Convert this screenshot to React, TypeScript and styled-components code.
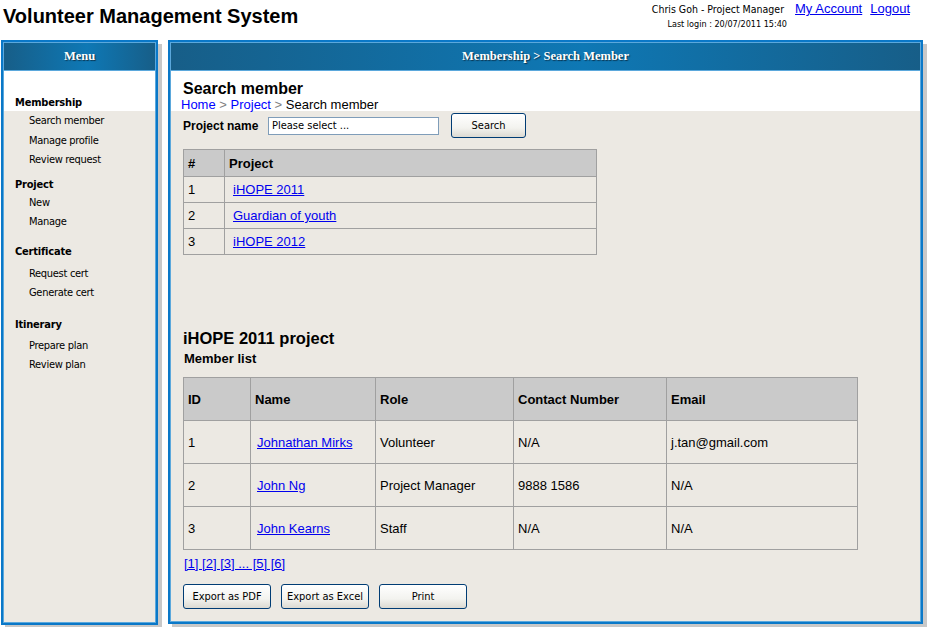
import React from "react";
import styled, { createGlobalStyle } from "styled-components";

const Global = createGlobalStyle`
  html, body { margin: 0; padding: 0; background: #ffffff; }
  body { font-family: "Liberation Sans", Arial, sans-serif; color: #000; }
  * { box-sizing: border-box; }
`;

const tahoma = `"DejaVu Sans Condensed", "DejaVu Sans", sans-serif`;

const Page = styled.div`
  width: 927px;
  height: 627px;
  display: flex;
  flex-direction: column;
`;

const TopBar = styled.header`
  height: 40px;
  display: flex;
  justify-content: space-between;
  align-items: flex-start;
`;

const AppTitle = styled.h1`
  margin: 4px 0 0 3px;
  font: bold 20px "Liberation Sans", Arial, sans-serif;
  line-height: 24px;
`;

const UserBox = styled.div`
  display: flex;
  flex-direction: column;
  align-items: flex-end;
  margin: 1px 17px 0 0;
`;

const UserLine = styled.div`
  display: flex;
  align-items: baseline;
  gap: 8px;
`;

const UserName = styled.span`
  font: 10.5px ${tahoma};
  margin-right: 3px;
`;

const TopLink = styled.a`
  font: 13px "Liberation Sans", Arial, sans-serif;
  color: #0000ee;
  text-decoration: underline;
`;

const LastLogin = styled.div`
  font: 9px ${tahoma};
  margin: 3px 123px 0 0;
`;

const Body = styled.div`
  display: flex;
  align-items: flex-start;
  gap: 10px;
  padding-left: 1px;
`;

const Panel = styled.section<{ $w: number; $h: number }>`
  width: ${(p) => p.$w}px;
  height: ${(p) => p.$h}px;
  border: 2px solid #0a78c8;
  box-shadow: inset 0 0 0 1px #5ba8dc, 4px 4px 0 #c8c8c8;
  background: #ece9e3;
  display: flex;
  flex-direction: column;
  padding: 1px;
`;

const PanelHeader = styled.div<{ $align: string }>`
  height: 28px;
  flex: none;
  background: linear-gradient(to right, #175e88 0%, #0e78b5 55%, #175e88 100%);
  border-bottom: 1px solid #5ba8dc;
  display: flex;
  align-items: center;
  justify-content: ${(p) => p.$align};
  color: #fff;
  font: bold 12.5px "Liberation Serif", "Times New Roman", serif;
  text-shadow: 1px 1px 1px #0b3550;
`;

const WhiteBand = styled.div`
  height: 40px;
  flex: none;
  background: #fff;
`;

const MenuGroup = styled.div<{ $mt: number; $gap: number }>`
  display: flex;
  flex-direction: column;
  margin-top: ${(p) => p.$mt}px;
  & > div:nth-child(2) {
    margin-top: ${(p) => p.$gap}px;
  }
`;

const MenuHead = styled.div`
  font: bold 11px ${tahoma};
  padding-left: 11px;
  height: 16px;
  line-height: 16px;
  letter-spacing: -0.2px;
`;

const MenuItem = styled.div`
  font: 11px ${tahoma};
  padding-left: 25px;
  height: 19.5px;
  line-height: 19.5px;
  letter-spacing: -0.3px;
`;

const MenuBand = styled(WhiteBand)`
  display: flex;
  align-items: flex-end;
`;

const MenuBody = styled.div`
  display: flex;
  flex-direction: column;
`;

const Heading = styled.h2`
  margin: 0;
  padding: 9px 0 0 12px;
  font: bold 16px "Liberation Sans", Arial, sans-serif;
  line-height: 18px;
`;

const Crumbs = styled.div`
  padding-left: 10px;
  font: 13px "Liberation Sans", Arial, sans-serif;
  line-height: 14px;
  white-space: pre;
`;

const CrumbLink = styled.span`
  color: #0000ff;
`;

const CrumbSep = styled.span`
  color: #808080;
`;

const Content = styled.div`
  padding: 2px 0 0 12px;
  display: flex;
  flex-direction: column;
  align-items: flex-start;
`;

const SearchRow = styled.div`
  display: flex;
  align-items: center;
  height: 25px;
  gap: 12px;
`;

const Label = styled.label`
  font: bold 12px "Liberation Sans", Arial, sans-serif;
  width: 73px;
  flex: none;
  white-space: nowrap;
`;

const TextInput = styled.div`
  width: 171px;
  height: 18px;
  border: 1px solid #7f9db9;
  background: #fff;
  font: 11px ${tahoma};
  line-height: 16px;
  padding-left: 3px;
`;

const Button = styled.button<{ $w: number }>`
  width: ${(p) => p.$w}px;
  height: 25px;
  border: 1px solid #003c74;
  border-radius: 3px;
  background: linear-gradient(to bottom, #ffffff 0%, #f3f3ef 60%, #dcdad2 100%);
  font: 11px ${tahoma};
  color: #000;
  padding: 0;
`;

const Table = styled.table<{ $w: number; $mt: number }>`
  width: ${(p) => p.$w}px;
  margin-top: ${(p) => p.$mt}px;
  border-collapse: collapse;
  border: 1px solid #a0a0a0;
  font: 13px "Liberation Sans", Arial, sans-serif;
  table-layout: fixed;
`;

const Th = styled.th<{ $h: number }>`
  background: #cacaca;
  border: 1px solid #a0a0a0;
  text-align: left;
  font-weight: bold;
  height: ${(p) => p.$h}px;
  padding: 0 0 0 4px;
`;

const Td = styled.td<{ $h: number; $pl?: number }>`
  border: 1px solid #a0a0a0;
  height: ${(p) => p.$h}px;
  padding: 0 0 0 ${(p) => p.$pl ?? 4}px;
  vertical-align: middle;
`;

const Link = styled.a`
  color: #0000ee;
  text-decoration: underline;
`;

const ProjectTitle = styled.h3`
  margin: 73px 0 0 0;
  font: bold 16.5px "Liberation Sans", Arial, sans-serif;
  line-height: 20px;
`;

const SubTitle = styled.h4`
  margin: 3px 0 0 1px;
  font: bold 13px "Liberation Sans", Arial, sans-serif;
  line-height: 16px;
`;

const Pager = styled.div`
  margin: 6px 0 0 1px;
  font: 13px "Liberation Sans", Arial, sans-serif;
  white-space: pre;
`;

const ButtonRow = styled.div`
  display: flex;
  gap: 10px;
  margin-top: 13px;
`;

const menu = [
  { head: "Project", items: ["New", "Manage"], mt: 7, gap: 0 },
  { head: "Certificate", items: ["Request cert", "Generate cert"], mt: 12, gap: 4 },
  { head: "Itinerary", items: ["Prepare plan", "Review plan"], mt: 14, gap: 3 },
];

const membershipItems = ["Search member", "Manage profile", "Review request"];

const projects = ["iHOPE 2011", "Guardian of youth", "iHOPE 2012"];

const members = [
  ["1", "Johnathan Mirks", "Volunteer", "N/A", "j.tan@gmail.com"],
  ["2", "John Ng", "Project Manager", "9888 1586", "N/A"],
  ["3", "John Kearns", "Staff", "N/A", "N/A"],
];

const memberCols = [67, 125, 138, 153, 191];

export default function App() {
  return (
    <Page>
      <Global />
      <TopBar>
        <AppTitle>Volunteer Management System</AppTitle>
        <UserBox>
          <UserLine>
            <UserName>Chris Goh - Project Manager</UserName>
            <TopLink href="#">My Account</TopLink>
            <TopLink href="#">Logout</TopLink>
          </UserLine>
          <LastLogin>Last login : 20/07/2011 15:40</LastLogin>
        </UserBox>
      </TopBar>
      <Body>
        <Panel $w={157} $h={585}>
          <PanelHeader $align="center">Menu</PanelHeader>
          <MenuBand>
            <MenuHead>Membership</MenuHead>
          </MenuBand>
          <MenuBody>
            {membershipItems.map((it) => (
              <MenuItem key={it}>{it}</MenuItem>
            ))}
            {menu.map((g) => (
              <MenuGroup key={g.head} $mt={g.mt} $gap={g.gap}>
                <MenuHead>{g.head}</MenuHead>
                {g.items.map((it) => (
                  <MenuItem key={it}>{it}</MenuItem>
                ))}
              </MenuGroup>
            ))}
          </MenuBody>
        </Panel>
        <Panel $w={755} $h={584}>
          <PanelHeader $align="center">Membership &gt; Search Member</PanelHeader>
          <WhiteBand>
            <Heading>Search member</Heading>
            <Crumbs>
              <CrumbLink>Home</CrumbLink>
              <CrumbSep> &gt; </CrumbSep>
              <CrumbLink>Project</CrumbLink>
              <CrumbSep> &gt; </CrumbSep>
              Search member
            </Crumbs>
          </WhiteBand>
          <Content>
            <SearchRow>
              <Label>Project name</Label>
              <TextInput>Please select ...</TextInput>
              <Button $w={75}>Search</Button>
            </SearchRow>
            <Table $w={414} $mt={11}>
              <colgroup>
                <col style={{ width: 41 }} />
                <col />
              </colgroup>
              <thead>
                <tr>
                  <Th $h={27}>#</Th>
                  <Th $h={27}>Project</Th>
                </tr>
              </thead>
              <tbody>
                {projects.map((p, i) => (
                  <tr key={p}>
                    <Td $h={26}>{i + 1}</Td>
                    <Td $h={26} $pl={8}>
                      <Link href="#">{p}</Link>
                    </Td>
                  </tr>
                ))}
              </tbody>
            </Table>
            <ProjectTitle>iHOPE 2011 project</ProjectTitle>
            <SubTitle>Member list</SubTitle>
            <Table $w={674} $mt={10}>
              <colgroup>
                {memberCols.map((w, i) => (
                  <col key={i} style={{ width: w }} />
                ))}
              </colgroup>
              <thead>
                <tr>
                  {["ID", "Name", "Role", "Contact Number", "Email"].map((h) => (
                    <Th key={h} $h={43}>{h}</Th>
                  ))}
                </tr>
              </thead>
              <tbody>
                {members.map((m) => (
                  <tr key={m[0]}>
                    {m.map((c, j) => (
                      <Td key={j} $h={43} $pl={j === 1 ? 6 : 4}>
                        {j === 1 ? <Link href="#">{c}</Link> : c}
                      </Td>
                    ))}
                  </tr>
                ))}
              </tbody>
            </Table>
            <Pager>
              <Link href="#">[1] [2] [3] ... [5] [6]</Link>
            </Pager>
            <ButtonRow>
              <Button $w={88}>Export as PDF</Button>
              <Button $w={88}>Export as Excel</Button>
              <Button $w={88}>Print</Button>
            </ButtonRow>
          </Content>
        </Panel>
      </Body>
    </Page>
  );
}
